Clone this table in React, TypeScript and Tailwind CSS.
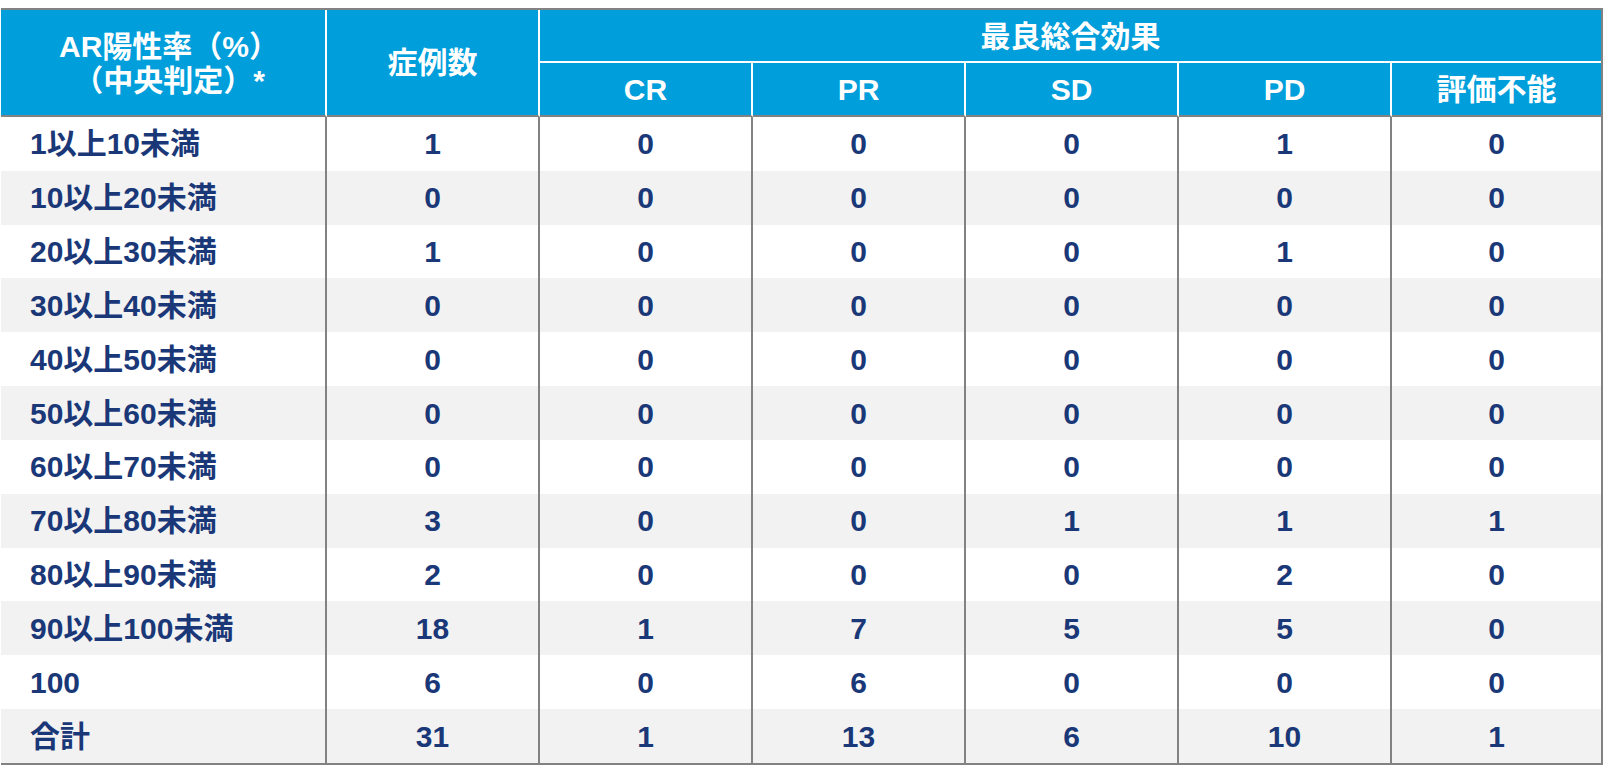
const SUB_COLUMNS = ['CR', 'PR', 'SD', 'PD', '評価不能'];

const ROWS: [string, number, number, number, number, number, number][] = [
  ['1以上10未満', 1, 0, 0, 0, 1, 0],
  ['10以上20未満', 0, 0, 0, 0, 0, 0],
  ['20以上30未満', 1, 0, 0, 0, 1, 0],
  ['30以上40未満', 0, 0, 0, 0, 0, 0],
  ['40以上50未満', 0, 0, 0, 0, 0, 0],
  ['50以上60未満', 0, 0, 0, 0, 0, 0],
  ['60以上70未満', 0, 0, 0, 0, 0, 0],
  ['70以上80未満', 3, 0, 0, 1, 1, 1],
  ['80以上90未満', 2, 0, 0, 0, 2, 0],
  ['90以上100未満', 18, 1, 7, 5, 5, 0],
  ['100', 6, 0, 6, 0, 0, 0],
  ['合計', 31, 1, 13, 6, 10, 1],
];

export default function App() {
  return (
    <div className="min-h-[780px] bg-white pt-[8px] pl-[1px] font-['Liberation_Sans','Noto_Sans_CJK_JP',sans-serif] text-[30px] font-bold">
      <table className="w-[1600px] table-fixed border-separate border-spacing-0 border-t-2 border-r-2 border-b-2 border-[#828282]">
        <colgroup>
          <col className="w-[326px]" />
          <col className="w-[213px]" />
          <col className="w-[213px]" />
          <col className="w-[213px]" />
          <col className="w-[213px]" />
          <col className="w-[213px]" />
          <col className="w-[209px]" />
        </colgroup>
        <thead className="text-white">
          <tr className="h-[53px]">
            <th rowSpan={2} className="border-r-2 border-b-2 border-r-white border-b-[#828282] bg-[#009edb] pt-[2px] pl-[12px] text-center leading-[34px] font-bold">
              AR陽性率（%）
              <br />
              （中央判定）*
            </th>
            <th rowSpan={2} className="border-r-2 border-b-2 border-r-white border-b-[#828282] bg-[#009edb] text-center font-bold">
              症例数
            </th>
            <th colSpan={5} className="border-b-2 border-white bg-[#009edb] pt-[1px] text-center font-bold">
              最良総合効果
            </th>
          </tr>
          <tr className="h-[54px]">
            {SUB_COLUMNS.map((label, i) => (
              <th
                key={label}
                className={
                  i < SUB_COLUMNS.length - 1
                    ? 'border-r-2 border-b-2 border-r-white border-b-[#828282] bg-[#009edb] text-center font-bold'
                    : 'border-b-2 border-[#828282] bg-[#009edb] text-center font-bold'
                }
              >
                {label}
              </th>
            ))}
          </tr>
        </thead>
        <tbody className="text-[#1a3878]">
          {ROWS.map(([label, ...values], rowIndex) => (
            <tr key={label} className={rowIndex % 2 === 0 ? 'h-[53.83px] bg-white' : 'h-[53.83px] bg-[#f2f2f2]'}>
              <td className="border-r-2 border-[#828282] pl-[29px] text-left">{label}</td>
              {values.map((value, i) => (
                <td key={i} className={i < values.length - 1 ? 'border-r-2 border-[#828282] text-center' : 'text-center'}>
                  {value}
                </td>
              ))}
            </tr>
          ))}
        </tbody>
      </table>
    </div>
  );
}
